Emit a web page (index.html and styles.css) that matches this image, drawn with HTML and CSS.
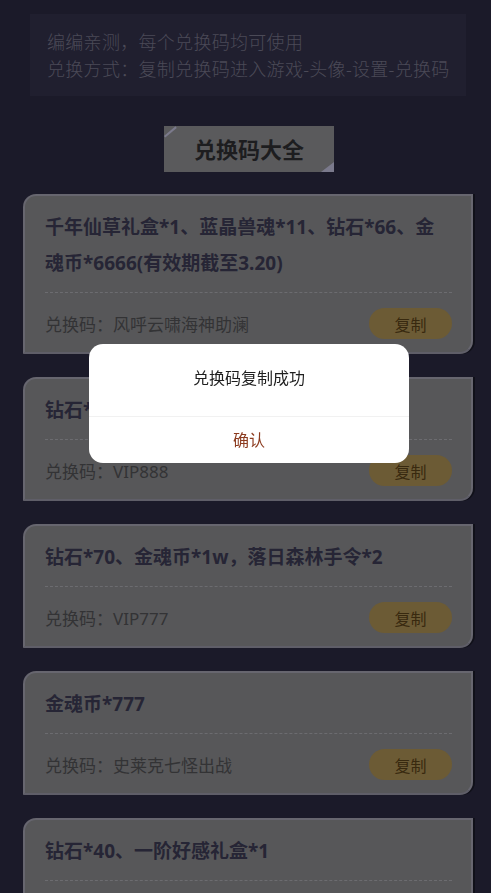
FILE: index.html
```html
<!DOCTYPE html>
<html lang="zh-CN">
<head>
  <meta charset="UTF-8" />
  <meta name="viewport" content="width=device-width, initial-scale=1" />
  <title>兑换码大全</title>
  <link rel="stylesheet" href="styles.css">
</head>
<body>

  <div class="tips">
    <p>编编亲测，每个兑换码均可使用</p>
    <p>兑换方式：复制兑换码进入游戏-头像-设置-兑换码</p>
  </div>

  <div class="title-wrap">
    <h1 class="title">兑换码大全</h1>
  </div>

  <div class="list">
    <div class="card">
      <div class="card-name">千年仙草礼盒*1、蓝晶兽魂*11、钻石*66、金魂币*6666(有效期截至3.20)</div>
      <div class="card-row">
        <span class="code">兑换码：风呼云啸海神助澜</span>
        <button class="copy-btn">复制</button>
      </div>
    </div>
    <div class="card">
      <div class="card-name">钻石*88、金魂币*8888</div>
      <div class="card-row">
        <span class="code">兑换码：VIP888</span>
        <button class="copy-btn">复制</button>
      </div>
    </div>
    <div class="card">
      <div class="card-name">钻石*70、金魂币*1w，落日森林手令*2</div>
      <div class="card-row">
        <span class="code">兑换码：VIP777</span>
        <button class="copy-btn">复制</button>
      </div>
    </div>
    <div class="card">
      <div class="card-name">金魂币*777</div>
      <div class="card-row">
        <span class="code">兑换码：史莱克七怪出战</span>
        <button class="copy-btn">复制</button>
      </div>
    </div>
    <div class="card">
      <div class="card-name">钻石*40、一阶好感礼盒*1</div>
      <div class="card-row">
        <span class="code">兑换码：斗罗大陆</span>
        <button class="copy-btn">复制</button>
      </div>
    </div>
  </div>

  <!-- copy success dialog -->
  <div class="dialog">
    <div class="dialog-msg">兑换码复制成功</div>
    <div class="dialog-btn">确认</div>
  </div>

</body>
</html>
```

FILE: styles.css
```css
body {
  margin: 0;
  padding: 14px 18px 0 23px;
  font-family: "Noto Sans", "Noto Sans CJK SC", sans-serif;
  background-color: #1b1a29;
  height: 893px;
  overflow: hidden;
  box-sizing: border-box;
}

/* TOP TIPS */
.tips {
  margin: 0 7px 0 7px;
  padding: 15px 10px 13px 17px;
  background: #201f2f;
}
.tips p {
  margin: 0;
  font-size: 18px;
  line-height: 27px;
  letter-spacing: 0.3px;
  color: #4b4a57;
  font-weight: 300;
  white-space: nowrap;
}

/* SECTION TITLE */
.title-wrap {
  display: flex;
  justify-content: center;
  margin: 29px 0 23px 0;
}
.title {
  position: relative;
  margin: 0;
  width: 170px;
  height: 46px;
  line-height: 46px;
  text-align: center;
  background: #5a5a5c;
  color: #1d1d1f;
  font-size: 22px;
  font-weight: 700;
  transform: translate(1px, 1px);
}
.title::before {
  content: "";
  position: absolute;
  left: 0;
  top: 10px;
  width: 15px;
  height: 2px;
  background: #7b7a8c;
  transform: rotate(-40deg);
  transform-origin: left top;
}
.title::after {
  content: "";
  position: absolute;
  right: 0;
  bottom: 0;
  width: 0;
  height: 0;
  border-left: 13px solid transparent;
  border-bottom: 10px solid #7b7a8c;
}

/* CARDS */
.list {
  display: flex;
  flex-direction: column;
  gap: 23px;
}
.card {
  background: #575759;
  border: 2px solid #67666f;
  border-bottom-color: #5f5e68;
  border-radius: 13px 0 13px 0;
  padding: 13px 19px 13px 20px;
  box-shadow: 2px 0 0 #101019;
}
.card-name {
  font-size: 19px;
  line-height: 36px;
  font-weight: 700;
  color: #262535;
}
.card-row {
  display: flex;
  justify-content: space-between;
  align-items: center;
  margin-top: 11px;
  padding-top: 15px;
  border-top: 1px dashed #6c6c70;
}
.code {
  font-size: 17px;
  color: #333335;
}
.copy-btn {
  width: 83px;
  height: 31px;
  border: none;
  border-radius: 16px;
  background: #6c5b35;
  color: #38290f;
  font-family: inherit;
  font-size: 16px;
  padding: 0;
}

/* DIALOG */
.dialog {
  position: fixed;
  left: 89px;
  top: 344px;
  width: 320px;
  background: #fff;
  border-radius: 14px;
  overflow: hidden;
  text-align: center;
}
.dialog-msg {
  padding: 23px 0 0 0;
  height: 49px;
  font-size: 16px;
  line-height: 22px;
  color: #1f1f1f;
  border-bottom: 1px solid #f1f1f1;
}
.dialog-btn {
  height: 46px;
  line-height: 46px;
  font-size: 16px;
  color: #8c3b1f;
}
```
